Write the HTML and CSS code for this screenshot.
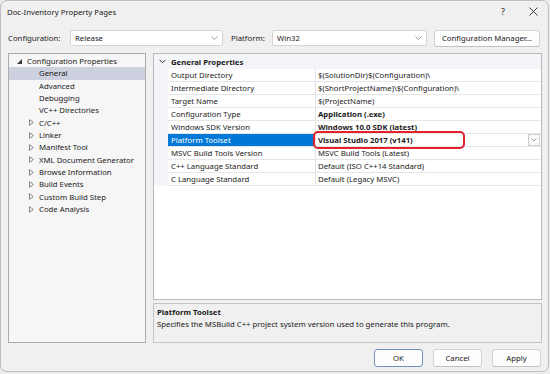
FILE: index.html
```html
<!DOCTYPE html>
<html>
<head>
<meta charset="utf-8">
<title>Doc-Inventory Property Pages</title>
<link rel="stylesheet" href="styles.css">
</head>
<body>
<div class="window">
  <div class="titlebar">
    <span class="title">Doc-Inventory Property Pages</span>
    <span class="help">?</span>
    <span class="close"><svg width="9" height="9" viewBox="0 0 9 9"><path d="M0.5 0.5 L8.5 8.5 M8.5 0.5 L0.5 8.5" stroke="#2a2a2a" stroke-width="0.9" fill="none"/></svg></span>
  </div>

  <div class="configrow">
    <span class="lbl lbl-config">Configuration:</span>
    <div class="combo combo-config"><span>Release</span><svg class="chev" width="7" height="4" viewBox="0 0 7 4"><path d="M0.5 0.5 L3.5 3.5 L6.5 0.5" stroke="#8a8a8a" stroke-width="0.8" fill="none"/></svg></div>
    <span class="lbl lbl-platform">Platform:</span>
    <div class="combo combo-platform"><span>Win32</span><svg class="chev" width="7" height="4" viewBox="0 0 7 4"><path d="M0.5 0.5 L3.5 3.5 L6.5 0.5" stroke="#8a8a8a" stroke-width="0.8" fill="none"/></svg></div>
    <div class="btn btn-cm">Configuration Manager...</div>
  </div>

  <div class="main">
    <div class="tree">
      <div class="node root"><svg class="exp" width="5" height="5" viewBox="0 0 5 5"><path d="M5 0 L5 5 L0 5 Z" fill="#3a3a3a"/></svg>Configuration Properties</div>
      <div class="node child selected">General</div>
      <div class="node child">Advanced</div>
      <div class="node child">Debugging</div>
      <div class="node child">VC++ Directories</div>
      <div class="node child coll"><svg class="exp" width="5" height="7" viewBox="0 0 5 7"><path d="M0.5 0.7 L4.3 3.5 L0.5 6.3 Z" fill="none" stroke="#6a6a6a" stroke-width="0.8"/></svg>C/C++</div>
      <div class="node child coll"><svg class="exp" width="5" height="7" viewBox="0 0 5 7"><path d="M0.5 0.7 L4.3 3.5 L0.5 6.3 Z" fill="none" stroke="#6a6a6a" stroke-width="0.8"/></svg>Linker</div>
      <div class="node child coll"><svg class="exp" width="5" height="7" viewBox="0 0 5 7"><path d="M0.5 0.7 L4.3 3.5 L0.5 6.3 Z" fill="none" stroke="#6a6a6a" stroke-width="0.8"/></svg>Manifest Tool</div>
      <div class="node child coll"><svg class="exp" width="5" height="7" viewBox="0 0 5 7"><path d="M0.5 0.7 L4.3 3.5 L0.5 6.3 Z" fill="none" stroke="#6a6a6a" stroke-width="0.8"/></svg>XML Document Generator</div>
      <div class="node child coll"><svg class="exp" width="5" height="7" viewBox="0 0 5 7"><path d="M0.5 0.7 L4.3 3.5 L0.5 6.3 Z" fill="none" stroke="#6a6a6a" stroke-width="0.8"/></svg>Browse Information</div>
      <div class="node child coll"><svg class="exp" width="5" height="7" viewBox="0 0 5 7"><path d="M0.5 0.7 L4.3 3.5 L0.5 6.3 Z" fill="none" stroke="#6a6a6a" stroke-width="0.8"/></svg>Build Events</div>
      <div class="node child coll"><svg class="exp" width="5" height="7" viewBox="0 0 5 7"><path d="M0.5 0.7 L4.3 3.5 L0.5 6.3 Z" fill="none" stroke="#6a6a6a" stroke-width="0.8"/></svg>Custom Build Step</div>
      <div class="node child coll"><svg class="exp" width="5" height="7" viewBox="0 0 5 7"><path d="M0.5 0.7 L4.3 3.5 L0.5 6.3 Z" fill="none" stroke="#6a6a6a" stroke-width="0.8"/></svg>Code Analysis</div>
    </div>

    <div class="right">
      <div class="grid">
        <div class="grid-head">
          <svg class="head-chev" width="7" height="5" viewBox="0 0 7 5"><path d="M0.5 0.8 L3.5 3.8 L6.5 0.8" stroke="#333" stroke-width="1" fill="none"/></svg>
          <span>General Properties</span>
        </div>
        <div class="row"><div class="gut"></div><div class="name">Output Directory</div><div class="value">$(SolutionDir)$(Configuration)\</div></div>
        <div class="row"><div class="gut"></div><div class="name">Intermediate Directory</div><div class="value">$(ShortProjectName)\$(Configuration)\</div></div>
        <div class="row"><div class="gut"></div><div class="name">Target Name</div><div class="value">$(ProjectName)</div></div>
        <div class="row"><div class="gut"></div><div class="name">Configuration Type</div><div class="value bold">Application (.exe)</div></div>
        <div class="row"><div class="gut"></div><div class="name">Windows SDK Version</div><div class="value bold">Windows 10.0 SDK (latest)</div></div>
        <div class="row active"><div class="gut"></div><div class="name">Platform Toolset</div><div class="value bold"><span>Visual Studio 2017 (v141)</span><span class="mark"></span><span class="dd"><svg width="6" height="4" viewBox="0 0 6 4"><path d="M0.5 0.5 L3 3 L5.5 0.5" stroke="#8a8a8a" stroke-width="0.8" fill="none"/></svg></span></div></div>
        <div class="row"><div class="gut"></div><div class="name">MSVC Build Tools Version</div><div class="value">MSVC Build Tools (Latest)</div></div>
        <div class="row"><div class="gut"></div><div class="name">C++ Language Standard</div><div class="value">Default (ISO C++14 Standard)</div></div>
        <div class="row"><div class="gut"></div><div class="name">C Language Standard</div><div class="value">Default (Legacy MSVC)</div></div>
      </div>
      <div class="desc">
        <div class="desc-title">Platform Toolset</div>
        <div class="desc-text">Specifies the MSBuild C++ project system version used to generate this program.</div>
      </div>
    </div>
  </div>

  <div class="buttons">
    <div class="btn btn-ok">OK</div>
    <div class="btn">Cancel</div>
    <div class="btn">Apply</div>
  </div>
</div>
</body>
</html>
```

FILE: styles.css
```css
* { box-sizing: border-box; }

html, body {
  margin: 0;
  padding: 0;
  background: #ececec;
}

body {
  font-family: "Noto Sans", "Open Sans", sans-serif;
  font-size: 7.75px;
  color: #1b1b1b;
  width: 550px;
  height: 374px;
  overflow: hidden;
}

.window {
  width: 549px;
  height: 372px;
  background: #f0f0f0;
  border: 1px solid #bdbdbd;
  border-radius: 7px;
  display: flex;
  flex-direction: column;
}

/* title bar */
.titlebar {
  height: 21px;
  display: flex;
  align-items: center;
  padding-left: 6px;
}
.title { flex: 1; }
.help {
  width: 10px;
  text-align: center;
  margin-right: 21px;
  font-size: 9px;
}
.close {
  display: flex;
  width: 9px;
  margin-right: 10px;
}

/* configuration row */
.configrow {
  margin-top: 8px;
  height: 16px;
  display: flex;
  align-items: center;
  padding-left: 7px;
}
.lbl-config { width: 62px; }
.lbl-platform { width: 41px; margin-left: 8px; }
.combo {
  height: 16px;
  background: #fff;
  border: 1px solid #d4d4d4;
  border-radius: 2px;
  display: flex;
  align-items: center;
  padding: 0 4px 0 4px;
}
.combo span { flex: 1; }
.combo-config { width: 153px; }
.combo-platform { width: 155px; }
.chev { display: block; }

.btn {
  height: 17px;
  background: #fdfdfd;
  border: 1px solid #d3d3d3;
  border-bottom-color: #c2c2c2;
  border-radius: 3px;
  display: flex;
  align-items: center;
  justify-content: center;
}
.btn-cm { width: 106px; margin-left: 7px; }

/* main area */
.main {
  margin-top: 7px;
  display: flex;
  gap: 7px;
  padding-left: 7px;
}

.tree {
  width: 138px;
  height: 290px;
  background: #f6f6f6;
  border: 1px solid #acacac;
  padding-top: 1px;
}
.node {
  height: 12.33px;
  line-height: 12.33px;
  display: flex;
  align-items: center;
  white-space: nowrap;
}
.node .exp { display: block; margin-right: 5px; }
.root { padding-left: 8px; }
.root .exp { margin-right: 5px; }
.child { padding-left: 30px; }
.child.coll { padding-left: 20px; }
.child.coll .exp { margin-right: 5px; }
.selected { background: #cdd0de; }

.right {
  width: 389px;
  display: flex;
  flex-direction: column;
  gap: 3px;
}

.grid {
  height: 247px;
  background: #fff;
  border: 1px solid #b9b9b9;
}
.grid-head {
  height: 15px;
  background: #f3f5f9;
  display: flex;
  align-items: center;
  padding-left: 5px;
  font-weight: bold;
}
.head-chev { display: block; margin-right: 5px; }

.row {
  display: grid;
  grid-template-columns: 14px 148px 1fr;
  height: 13px;
}
.gut { background: #f3f5f9; }
.name, .value {
  border-bottom: 1px solid #e6e6e6;
  line-height: 12px;
  white-space: nowrap;
  overflow: visible;
}
.name {
  padding-left: 3px;
  border-right: 1px solid #e2e2e2;
}
.value {
  padding-left: 2px;
  display: flex;
  align-items: center;
  position: relative;
}
.bold { font-weight: bold; }

.row.active .name {
  background: #0078d7;
  color: #fff;
}
.row.active .value span:first-child { flex: 1; }
.mark {
  position: absolute;
  left: -3px;
  top: -3px;
  width: 152px;
  height: 18px;
  border: 2px solid #e2222c;
  border-radius: 5px;
}
.dd {
  width: 12px;
  height: 12px;
  border: 1px solid #cfcfcf;
  background: #fbfbfb;
  display: flex;
  align-items: center;
  justify-content: center;
  margin-right: 1px;
}
.dd svg { display: block; }

.desc {
  height: 40px;
  background: #f0f0f0;
  border: 1px solid #c4c4c4;
  padding: 2px 3px;
}
.desc-title {
  font-weight: bold;
  line-height: 12px;
}
.desc-text { line-height: 13px; }

/* buttons */
.buttons {
  margin-top: 6px;
  display: flex;
  justify-content: flex-end;
  gap: 10px;
  padding-right: 7px;
}
.buttons .btn { width: 49px; height: 18px; }
.btn-ok { border-color: #6f93bf; }
```
